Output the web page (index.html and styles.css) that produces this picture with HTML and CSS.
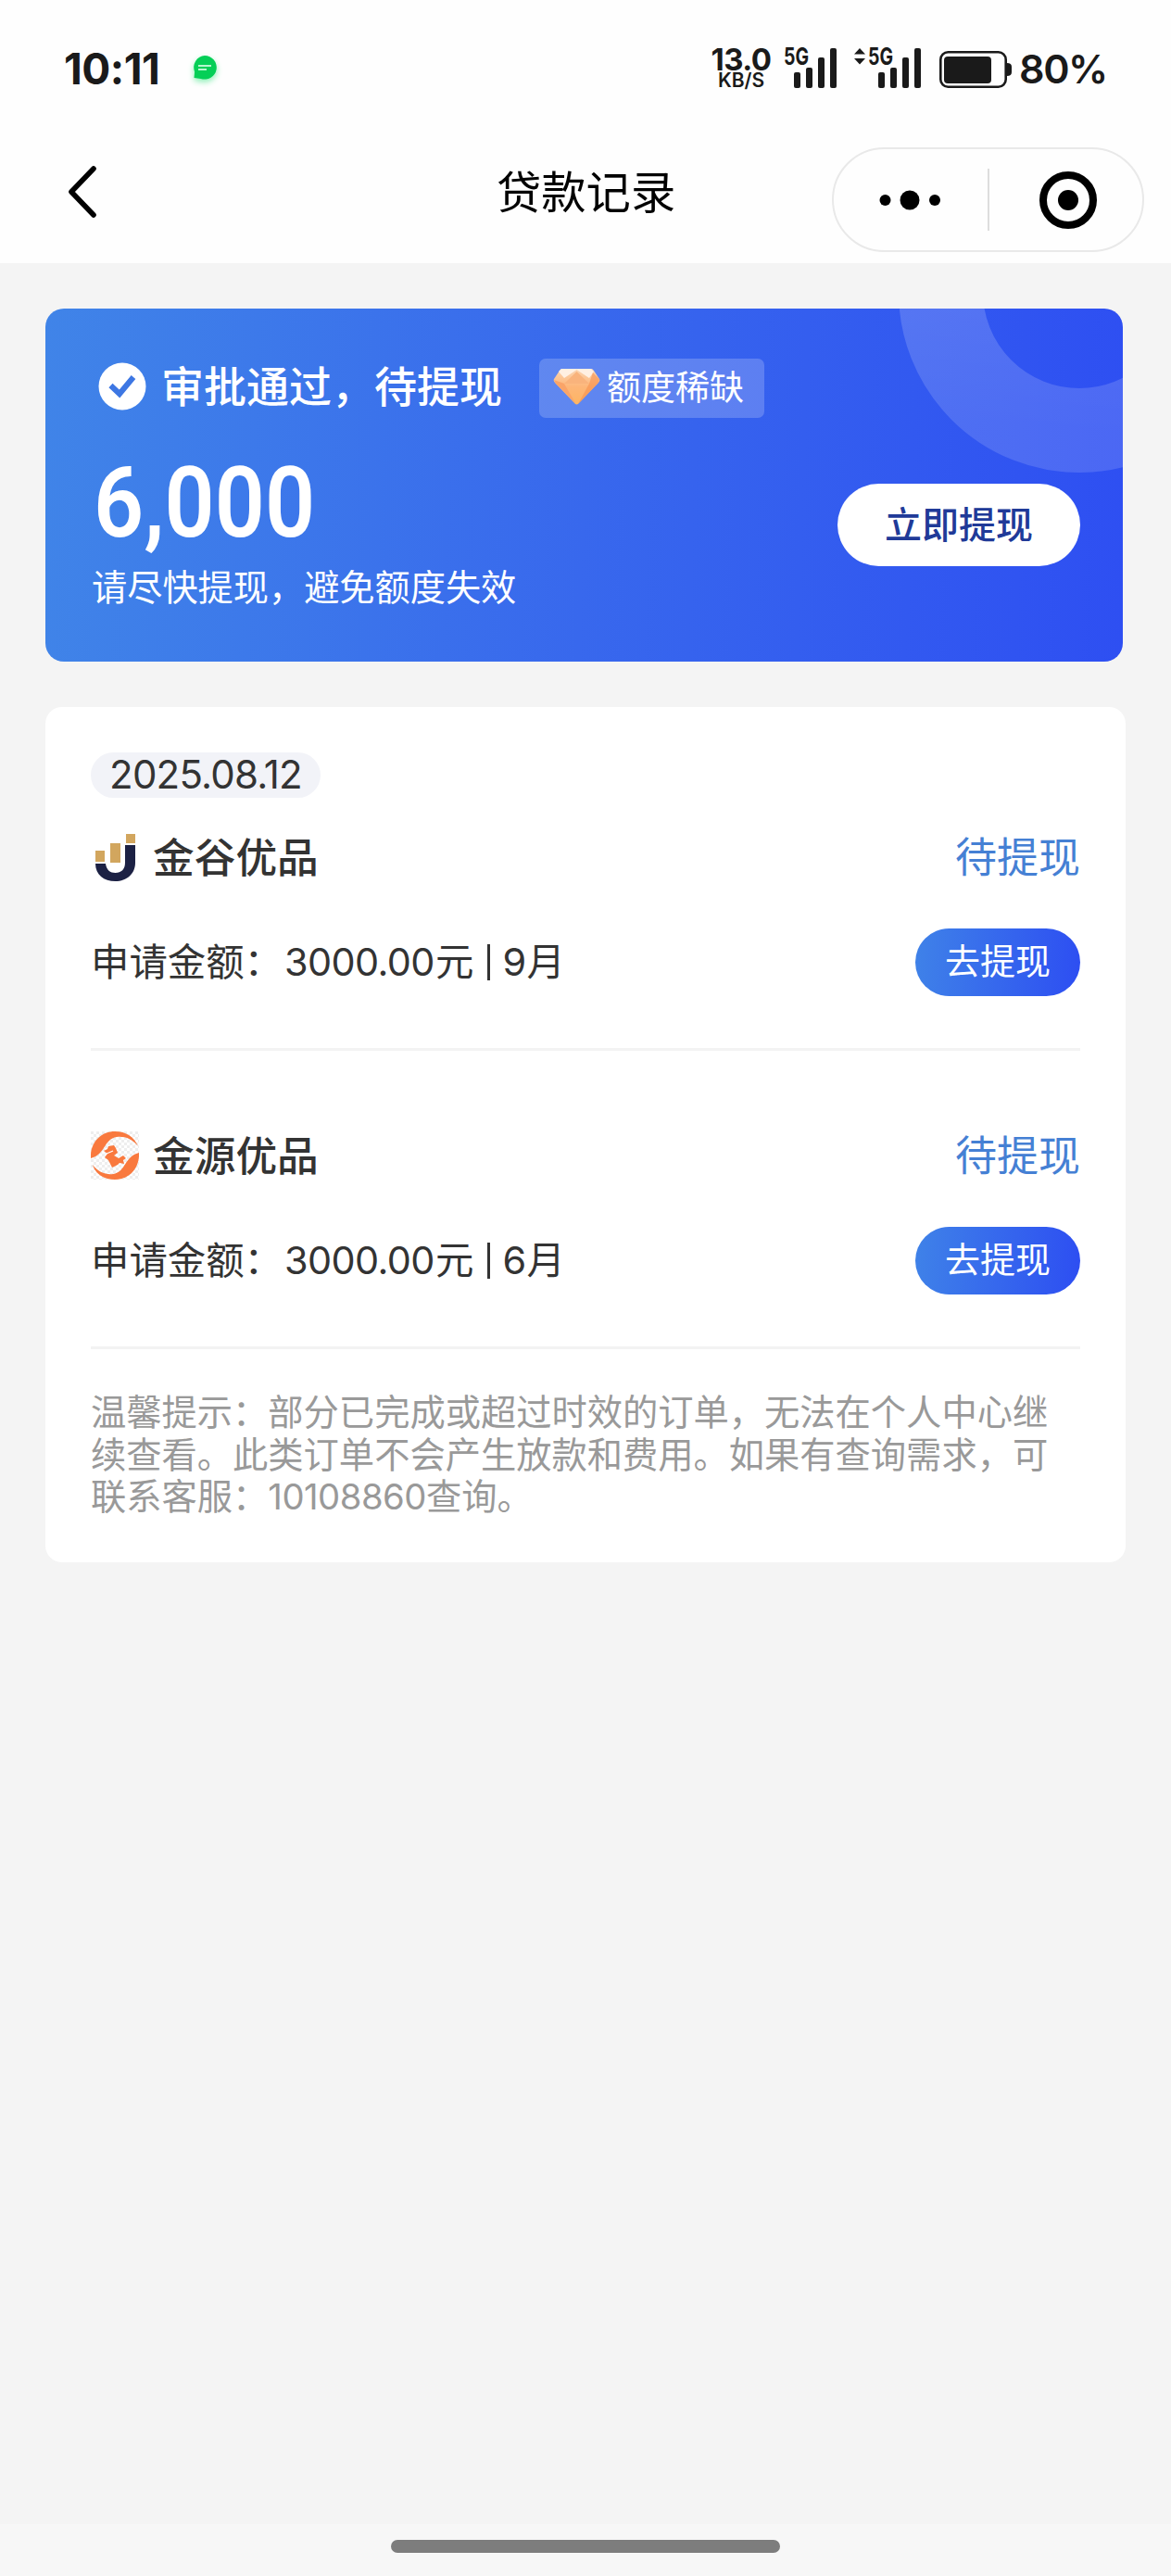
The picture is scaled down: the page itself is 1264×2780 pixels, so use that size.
FILE: index.html
```html
<!DOCTYPE html>
<html lang="zh-CN">
<head>
<meta charset="utf-8">
<title>贷款记录</title>
<link rel="stylesheet" href="styles.css">
</head>
<body>
<header class="top">
  <div class="status">
    <span class="time">10:11</span>
    <svg class="msg" width="30" height="34" viewBox="0 0 30 34"><path d="M15 2a12.8 12.8 0 1 1-4.200 24.900L3.500 26l.6-6.500A12.800 12.800 0 0 1 15 2z" fill="#05cf57"/><path d="M8 13h14M8 17h9" stroke="#b5f7cf" stroke-width="2"/></svg>
    <div class="speed"><span class="rate">13.0</span><span class="unit">KB/S</span></div>
    <svg class="signal" width="58" height="44" viewBox="0 0 58 44"><text x="0" y="19" textLength="27" lengthAdjust="spacingAndGlyphs">5G</text><g><rect x="11" y="27" width="7" height="17" rx="2"/><rect x="24" y="22" width="7" height="22" rx="2"/><rect x="37" y="11" width="7" height="33" rx="2"/><rect x="50" y="1" width="7" height="43" rx="2"/></g></svg>
    <svg class="signal second" width="72" height="44" viewBox="0 0 72 44"><path d="M0 7.500L6 1l6 6.500zM0 12h12l-6 6.500z"/><text x="15" y="19" textLength="27" lengthAdjust="spacingAndGlyphs">5G</text><g><rect x="26" y="27" width="7" height="17" rx="2"/><rect x="39" y="22" width="7" height="22" rx="2"/><rect x="52" y="11" width="7" height="33" rx="2"/><rect x="65" y="1" width="7" height="43" rx="2"/></g></svg>
    <svg class="battery" width="79" height="40" viewBox="0 0 79 40"><rect x="1.300" y="1.300" width="70.400" height="37.400" rx="8" fill="none" stroke="#1a1a1a" stroke-width="2.600"/><rect x="5" y="6" width="51" height="29" rx="4"/><path d="M73 13q5 0 5 4v6q0 4-5 4z"/></svg>
    <span class="percent">80%</span>
  </div>
  <nav class="nav">
    <svg class="back" width="34" height="56" viewBox="0 0 34 56"><path d="M29 3L5 28l24 25" fill="none" stroke="#000" stroke-width="5.600" stroke-linejoin="round" stroke-linecap="round"/></svg>
    <h1 class="title">贷款记录</h1>
    <div class="capsule">
      <svg width="66" height="22" viewBox="0 0 66 22"><circle cx="6.500" cy="11" r="6"/><circle cx="33" cy="11" r="10.500"/><circle cx="60" cy="11" r="6"/></svg>
      <i class="rule"></i>
      <svg width="62" height="62" viewBox="0 0 62 62"><circle cx="31" cy="31" r="27" fill="none" stroke="#000" stroke-width="8"/><circle cx="31" cy="31" r="11"/></svg>
    </div>
  </nav>
</header>
<main class="main">
  <section class="banner">
    <svg class="halo" width="241" height="177" viewBox="0 0 241 177"><defs><linearGradient id="halo" x1="0" y1="0" x2="0" y2="1"><stop offset=".45" stop-color="#fff" stop-opacity=".18"/><stop offset="1" stop-color="#fff" stop-opacity=".14"/></linearGradient></defs><circle cx="194" cy="-18" r="149.500" fill="none" stroke="url(#halo)" stroke-width="91"/></svg>
    <div class="approved">
      <svg width="52" height="52" viewBox="0 0 52 52"><circle cx="26" cy="26" r="25.500" fill="#fff"/><path d="M13.500 25l9.500 9 15-18" fill="none" stroke="#3d77e3" stroke-width="6"/></svg>
      <strong class="approved-text">审批通过，待提现</strong>
      <span class="scarce"><svg width="51" height="40" viewBox="0 0 51 40"><defs><linearGradient id="gem" x1="0" y1="0" x2="0" y2="1"><stop offset="0" stop-color="#fbd6b4"/><stop offset=".5" stop-color="#fdb678"/><stop offset="1" stop-color="#fdb562"/></linearGradient></defs><path d="M10 1h31q2 0 3 2l6 9q1 2-1 4L27.500 38.500q-2 2-4 0L2 16q-2-2-1-4L7 3q1-2 3-2z" fill="url(#gem)"/><path d="M9 1h32l3 3-5 7-13.500-9L12 11 6 4z" fill="#fff0e2"/><path d="M25.500 4L12 17h27z" fill="#f9b37c"/><path d="M39 17l4-12 7 7-1 4-22 23z" fill="#f7914f" opacity=".6"/><path d="M12 17L1 13l2 4 21 21z" fill="#faa468"/></svg>额度稀缺</span>
    </div>
    <div class="quota">
      <div>
        <div class="amount">6,000</div>
        <p class="hint">请尽快提现，避免额度失效</p>
      </div>
      <button class="withdraw">立即提现</button>
    </div>
  </section>
  <section class="card">
    <span class="date">2025.08.12</span>
    <article class="loan">
      <div class="row head">
        <svg class="logo" width="52" height="52" viewBox="0 0 52 52"><path d="M5 33h11c1 7 5 10 10.500 10C33 43 37 39 37 32V13h11v19c0 12-9 20-21.500 20S5 45 5 33z" fill="#1c2144"/><path d="M5 19h10v12H5zM21 11h11v21H21zM38 1h10v10H38z" fill="#d2a65e"/></svg>
        <h2 class="name">金谷优品</h2><span class="state">待提现</span>
      </div>
      <div class="row detail"><span class="apply">申请金额：</span><span class="sum">3000.00</span><span class="apply">元</span><i class="bar"></i><span class="term">9</span><span class="apply">月</span><button class="go">去提现</button></div>
    </article>
    <article class="loan">
      <div class="row head">
        <svg class="logo" width="52" height="52" viewBox="0 0 52 52"><defs><pattern id="tiles" width="6" height="6" patternUnits="userSpaceOnUse"><path d="M0 0h3v3H0zM3 3h3v3H3z" fill="#eee"/></pattern></defs><path d="M0 0h52v52H0z" fill="url(#tiles)"/><path d="M0 29C-1 12 11 0 26 0c12 0 21 6 25 16C45 8 36 5 28 6 14 8 16 25 0 29z" fill="#f9793e"/><path d="M52 23c1 17-11 29-26 29C14 52 5 46 2 36c6 8 14 11 22 10 14-2 12-19 28-23z" fill="#f9793e"/><path d="M14 21l4-2 1-3 6-1 2 3 2 5-4 3 5 3 5-3 3 3-3 2 1 4-5-1-2 2-6 3-4-8-4-3 3-4z" fill="#f9793e"/><path d="M17 24l7-3" stroke="#fff" stroke-width="1.200"/></svg>
        <h2 class="name">金源优品</h2><span class="state">待提现</span>
      </div>
      <div class="row detail"><span class="apply">申请金额：</span><span class="sum">3000.00</span><span class="apply">元</span><i class="bar"></i><span class="term">6</span><span class="apply">月</span><button class="go">去提现</button></div>
    </article>
    <p class="tips">温馨提示：部分已完成或超过时效的订单，无法在个人中心继<br>续查看。此类订单不会产生放款和费用。如果有查询需求，可<br>联系客服：<span class="phone">10108860</span>查询。</p>
  </section>
</main>
<footer class="home"><i class="handle"></i></footer>
</body>
</html>
```
FILE: styles.css
```css
* { box-sizing: border-box; margin: 0; padding: 0; }
body {
  width: 1264px;
  height: 2780px;
  display: flex;
  flex-direction: column;
  background: #f4f4f4;
  color: #333;
  font-family: Inter, "Noto Sans CJK SC", sans-serif;
  white-space: nowrap;
}
svg { display: block; flex: none; }
button { border: 0; font-family: inherit; white-space: nowrap; }
h1, h2 { font-weight: 400; }

.top { height: 284px; background: #fefefe; }
.status { display: flex; height: 149px; padding-left: 69px; color: #1a1a1a; fill: #1a1a1a; }
.time { width: 137px; margin-top: 46px; font-size: 46px; line-height: 56px; font-weight: 700; letter-spacing: -0.500px; }
.msg { margin-top: 58px; filter: drop-shadow(0 3px 3px #8bf0b5); }
.speed { width: 64px; margin: 50px 14px 0 532px; display: flex; flex-direction: column; align-items: center; }
.rate { font-size: 33px; line-height: 28px; font-weight: 700; letter-spacing: -0.5px; }
.unit { font-size: 21px; line-height: 18px; font-weight: 600; }
.signal { margin-top: 51px; font-size: 26px; font-weight: 700; overflow: visible; }
.second { margin-left: 18px; }
.battery { margin: 55px 0 0 20px; }
.percent { margin: 48px 0 0 7px; font-size: 43px; line-height: 52px; font-weight: 600; letter-spacing: -1.400px; }

.nav { height: 135px; padding-left: 72px; display: flex; align-items: flex-start; }
.back { margin-top: 30px; }
.title { margin: 26px 0 0 430px; width: 196px; font-size: 48.300px; line-height: 66px; color: #000; }
.capsule { width: 337px; height: 113px; margin: 10px 0 0 166px; padding: 0 47px 0 49px; border: 2px solid #e9e9e9; border-radius: 57px; display: flex; align-items: center; }
.rule { width: 2px; height: 67px; margin: 0 54px 0 51px; background: #ddd; }

.main { padding: 49px 49px 0; }
.banner { position: relative; width: 1163px; height: 381px; padding: 54px 46px 0 57px; border-radius: 20px; overflow: hidden; background: linear-gradient(92deg, #4084e8 0%, #3868ed 50%, #2e4ff2 100%); color: #fff; }
.halo { position: absolute; top: 0; right: 0; }
.approved { display: flex; align-items: center; height: 64px; }
.approved svg { margin-top: -4px; }
.approved-text { width: 368px; margin: -4px 40px 0 16px; font-size: 46px; line-height: 60px; font-weight: 500; }
.scarce { display: flex; align-items: center; width: 243px; height: 64px; padding-left: 15px; gap: 7px; border-radius: 7px; background: rgba(255, 255, 255, .2); font-size: 37px; line-height: 60px; }
.quota { position: relative; display: flex; justify-content: space-between; }
.amount { height: 152px; padding: 36px 0 0 0; margin-left: -5px; font-family: Roboto, sans-serif; font-size: 106px; line-height: 112px; font-weight: 600; transform: scaleX(.895); transform-origin: left; }
.hint { margin-left: -7px; font-size: 38.200px; line-height: 62px; }
.withdraw { width: 262px; height: 89px; margin-top: 71px; border-radius: 45px; background: #fff; color: #203a98; font-size: 40px; font-weight: 500; line-height: 90px; }

.card { width: 1166px; height: 923px; margin-top: 49px; padding: 49px; border-radius: 18px; background: #fff; }
.date { display: block; width: 248px; height: 49px; border-radius: 25px; background: #f2f3f8; text-align: center; font-size: 42px; line-height: 48px; letter-spacing: -0.800px; }
.loan { height: 322px; border-bottom: 3px solid #f3f3f3; padding-top: 37px; }
.loan + .loan { padding-top: 86px; }
.date + .loan { height: 273px; }
.row { display: flex; align-items: center; }
.head { height: 56px; }
.name { margin: 0 0 0 15px; font-size: 44.700px; line-height: 56px; font-weight: 500; }
.logo { margin-top: -2px; }
.state { margin: 0 0 0 auto; font-size: 45px; line-height: 56px; color: #4580d4; }
.detail { height: 73px; margin-top: 48px; font-size: 41.400px; line-height: 60px; }
.sum { width: 163px; letter-spacing: -0.600px; margin-left: 2px; }
.bar { width: 3px; height: 39px; margin: 0 13px 0 15px; background: #333; }
.term { width: 26px; }
.apply, .sum, .term { margin-top: -1px; }
.go { width: 178px; height: 73px; margin-left: auto; border-radius: 37px; background: linear-gradient(94deg, #3f82e8, #2d4ef2); color: #fff; font-size: 38px; line-height: 71px; padding-bottom: 2px; }
.tips { margin-top: 46px; color: #999; font-size: 38.270px; line-height: 45.500px; }
.phone { letter-spacing: -0.500px; }

.home { height: 56px; margin-top: auto; padding-top: 17px; background: #f7f7f7; }
.handle { display: block; width: 420px; height: 14px; margin: 0 auto; border-radius: 7px; background: #7d7d7d; }
```
